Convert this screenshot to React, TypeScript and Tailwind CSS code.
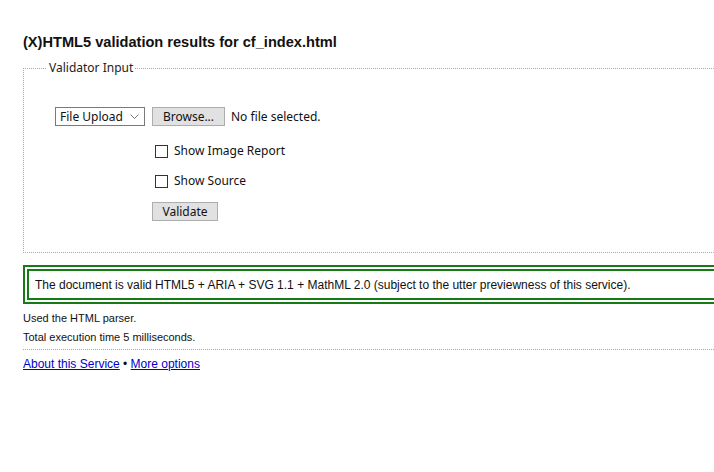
import React from "react";

function Checkbox() {
  return <span className="block w-[13px] h-[13px] border border-[#333333] bg-white ml-[3px] shrink-0" />;
}

export default function App() {
  return (
    <div className="w-[714px] h-[472px] overflow-hidden bg-white text-black" style={{ fontFamily: '"Liberation Sans", Arial, sans-serif' }}>
      <div className="w-[780px] pl-[23px] pt-[33px]">
        <h2 className="text-[14.6px] leading-[18px] font-bold text-[#111]">(X)HTML5 validation results for cf_index.html</h2>
        <fieldset className="mt-[9px] border border-dotted border-[#a8a8a8] h-[193px]" style={{ fontFamily: '"Noto Sans", "Open Sans", sans-serif' }}>
          <legend className="ml-[23px] px-[2px] text-[12px] leading-[16px] text-[#222]">Validator Input</legend>
          <div className="pl-[31px] pt-[31px] flex items-center h-[50px] text-[12px] text-[#111]">
            <div className="w-[90px] h-[19px] border border-[#7a7a7a] bg-white flex items-center pl-[4px] pr-[5px] justify-between">
              <span className="leading-[16px]">File Upload</span>
              <svg width="9" height="6" viewBox="0 0 9 6" className="mt-[1px]">
                <path d="M0.5 0.5 L4.5 4.5 L8.5 0.5" fill="none" stroke="#777" strokeWidth="1" />
              </svg>
            </div>
            <div className="ml-[7px] w-[73px] h-[19px] border border-[#adadad] bg-[#e1e1e1] flex items-center justify-center leading-[16px]">Browse...</div>
            <span className="ml-[6px] leading-[16px]">No file selected.</span>
          </div>
          <div className="pl-[128px] text-[12px] text-[#111]">
            <div className="mt-[15px] h-[20px] flex items-center">
              <Checkbox />
              <span className="ml-[6px] leading-[16px]">Show Image Report</span>
            </div>
            <div className="mt-[10px] h-[20px] flex items-center">
              <Checkbox />
              <span className="ml-[6px] leading-[16px]">Show Source</span>
            </div>
            <div className="mt-[11px] w-[66px] h-[19px] border border-[#adadad] bg-[#e1e1e1] flex items-center justify-center leading-[16px]">Validate</div>
          </div>
        </fieldset>
        <div className="mt-[12px] h-[39px] border-[6px] border-double border-[#167a16] flex items-center pl-[6px] text-[12px] leading-[14px] text-[#111]">
          The document is valid HTML5 + ARIA + SVG 1.1 + MathML 2.0 (subject to the utter previewness of this service).
        </div>
        <p className="mt-[8px] text-[11px] leading-[13px] text-[#111]">Used the HTML parser.</p>
        <p className="mt-[6px] text-[11px] leading-[13px] text-[#111]">Total execution time 5 milliseconds.</p>
        <div className="mt-[5px] border-t border-dotted border-[#a8a8a8]" />
        <p className="mt-[7px] text-[12px] leading-[15px] text-[#111]">
          <a href="#" className="text-[#0000cc] underline">About this Service</a> • <a href="#" className="text-[#0000cc] underline">More options</a>
        </p>
      </div>
    </div>
  );
}
